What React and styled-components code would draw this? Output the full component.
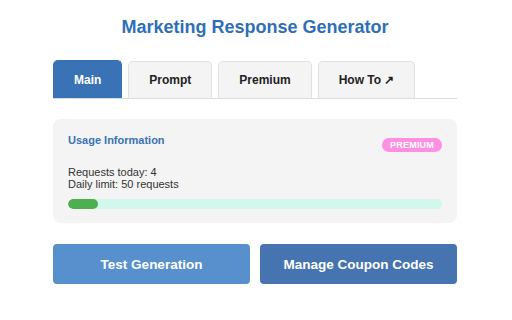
import React from 'react';
import styled, { createGlobalStyle } from 'styled-components';

const GlobalStyle = createGlobalStyle`
  body {
    margin: 0;
    padding-right: 2px;
    background: #ffffff;
    font-family: "Liberation Sans", Arial, sans-serif;
  }
`;

const Wrapper = styled.div`
  width: 404px;
  margin: 0 auto;
  padding-top: 16px;
`;

const Title = styled.h1`
  margin: 0 0 22px;
  font-size: 18px;
  line-height: 22px;
  font-weight: bold;
  text-align: center;
  color: #2f6fb6;
`;

const TabBar = styled.div`
  display: flex;
  align-items: flex-end;
  gap: 6px;
  border-bottom: 1px solid #dcdcdc;
`;

const Tab = styled.button`
  height: ${p => (p.active ? '38px' : '37px')};
  padding: 0 20px;
  border: 1px solid ${p => (p.active ? '#3a72b6' : '#e0e0e0')};
  border-bottom: none;
  border-radius: 5px 5px 0 0;
  background: ${p => (p.active ? '#3a72b6' : '#f4f4f4')};
  color: ${p => (p.active ? '#ffffff' : '#222222')};
  font-family: inherit;
  font-size: 12px;
  font-weight: bold;
`;

const Card = styled.div`
  margin-top: 20px;
  padding: 14px 15px;
  background: #f4f4f4;
  border-radius: 8px;
`;

const CardHeader = styled.div`
  display: flex;
  justify-content: space-between;
  align-items: flex-start;
`;

const CardTitle = styled.h3`
  margin: 0;
  font-size: 11px;
  line-height: 14px;
  font-weight: bold;
  color: #3a72b6;
`;

const Badge = styled.span`
  margin-top: 5px;
  height: 14px;
  padding: 0 8px;
  border-radius: 7px;
  background: #ff8fe2;
  color: #ffffff;
  font-size: 9px;
  line-height: 14px;
  font-weight: bold;
  letter-spacing: 0.2px;
`;

const Stats = styled.div`
  margin-top: 14px;
  font-size: 11px;
  line-height: 12px;
  color: #333333;
`;

const Track = styled.div`
  margin-top: 9px;
  height: 10px;
  border-radius: 5px;
  background: #d2f7ec;
  overflow: hidden;
`;

const Fill = styled.div`
  height: 100%;
  border-radius: 5px;
  background: #4caf50;
`;

const Actions = styled.div`
  display: grid;
  grid-template-columns: 1fr 1fr;
  gap: 10px;
  margin-top: 21px;
`;

const ActionButton = styled.button`
  height: 40px;
  border: none;
  border-radius: 4px;
  background: ${p => (p.primary ? '#4574b1' : '#5790cd')};
  color: #ffffff;
  font-family: inherit;
  font-size: 13.5px;
  font-weight: bold;
`;

const tabs = ['Main', 'Prompt', 'Premium', 'How To ↗'];

const App = () => {
  const used = 4;
  const limit = 50;
  return (
    <Wrapper>
      <GlobalStyle />
      <Title>Marketing Response Generator</Title>
      <TabBar>
        {tabs.map((t, i) => (
          <Tab key={t} active={i === 0}>{t}</Tab>
        ))}
      </TabBar>
      <Card>
        <CardHeader>
          <CardTitle>Usage Information</CardTitle>
          <Badge>PREMIUM</Badge>
        </CardHeader>
        <Stats>
          <div>Requests today: {used}</div>
          <div>Daily limit: {limit} requests</div>
        </Stats>
        <Track>
          <Fill style={{ width: `${(used / limit) * 100}%` }} />
        </Track>
      </Card>
      <Actions>
        <ActionButton>Test Generation</ActionButton>
        <ActionButton primary>Manage Coupon Codes</ActionButton>
      </Actions>
    </Wrapper>
  );
};

export default App;
